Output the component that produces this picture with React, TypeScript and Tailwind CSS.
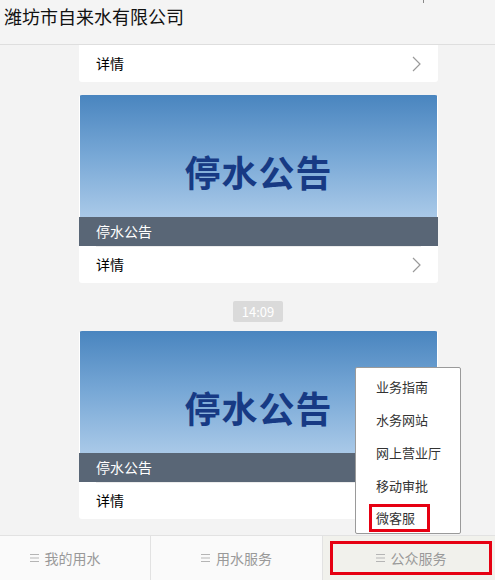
import React from "react";

const font = { fontFamily: '"Microsoft YaHei", "Noto Sans CJK SC", "Noto Sans", sans-serif' };

function Chevron() {
  return (
    <svg width="9" height="16" viewBox="0 0 9 16" fill="none">
      <polyline points="1,1 8,8 1,15" stroke="#9a9a9a" strokeWidth="1.2" />
    </svg>
  );
}

function DetailRow({ line }: { line?: boolean }) {
  return (
    <div className="h-[37px] px-[17px] flex items-center justify-between relative">
      {line && <div className="absolute top-0 left-[17px] right-[17px] h-px bg-[#ececec]" />}
      <span className="text-[14px] text-black">详情</span>
      <Chevron />
    </div>
  );
}

function NoticeCard() {
  return (
    <div className="bg-white rounded-[3px] overflow-hidden">
      <div className="h-[122px] mx-px bg-gradient-to-b from-[#4985bf] via-[#78a8d6] to-[#a9c9e8] flex items-center justify-center pt-[30px]">
        <span className="text-[36px] font-semibold text-[#173a84] tracking-[1px]">停水公告</span>
      </div>
      <div className="h-[29px] bg-[#596676] flex items-center pl-[17px] text-[14px] text-white">
        停水公告
      </div>
      <DetailRow line />
    </div>
  );
}

function Bars() {
  return (
    <svg width="9" height="8" viewBox="0 0 9 8" className="mr-[6px]">
      <rect x="0" y="0" width="9" height="1" fill="#b5b5b5" />
      <rect x="0" y="3.5" width="9" height="1" fill="#b5b5b5" />
      <rect x="0" y="7" width="9" height="1" fill="#b5b5b5" />
    </svg>
  );
}

const menu = ["业务指南", "水务网站", "网上营业厅", "移动审批", "微客服"];

export default function App() {
  return (
    <div className="h-[580px] flex flex-col bg-[#f3f3f3] relative overflow-hidden" style={font}>
      <div className="h-[45px] shrink-0 bg-[#f4f4f4] border-b border-[#dedede] pl-[4px] pt-[3px] relative">
        <span className="text-[18px] text-[#111]">潍坊市自来水有限公司</span>
        <div className="absolute top-0 left-[423px] w-px h-[3px] bg-[#888]" />
      </div>

      <div className="flex-1 overflow-hidden">
        <div className="ml-[79px] w-[359px] flex flex-col">
          <div className="bg-white rounded-b-[3px]">
            <DetailRow />
          </div>
          <div className="mt-[13px]">
            <NoticeCard />
          </div>
          <div className="flex justify-center mt-[18px] mb-[9px] pr-[1px]">
            <span className="h-[21px] px-[9px] rounded-[2px] bg-[#dadada] text-white text-[13px] flex items-center">
              14:09
            </span>
          </div>
          <NoticeCard />
        </div>
      </div>

      <div className="h-[45px] shrink-0 border-t border-[#e2e2e2] bg-[#fafafa] grid grid-cols-[151px_172px_1fr] text-[14px] text-[#999]">
        <div className="flex items-center justify-center pr-[20px] border-r border-[#e2e2e2]">
          <Bars />我的用水
        </div>
        <div className="flex items-center justify-center border-r border-[#e2e2e2]">
          <Bars />用水服务
        </div>
        <div className="bg-[#f1f1ec] flex py-[5px] pl-[7px] pr-[3px]">
          <div className="flex-1 border-[3px] border-[#e60012] flex items-center justify-center">
            <Bars />公众服务
          </div>
        </div>
      </div>

      <div className="absolute left-[355px] top-[367px] w-[106px] h-[167px] bg-white border border-[#9a9a9a] rounded-[2px] flex flex-col pt-[2px] text-[13px] text-[#333]">
        {menu.map((m, i) =>
          i === menu.length - 1 ? (
            <div key={m} className="mt-[2px] ml-[13px] w-[61px] h-[28px] border-[3px] border-[#e60012] flex items-center pl-[4px]">
              {m}
            </div>
          ) : (
            <div key={m} className="h-[33px] flex items-center pl-[20px]">
              {m}
            </div>
          )
        )}
      </div>
    </div>
  );
}
